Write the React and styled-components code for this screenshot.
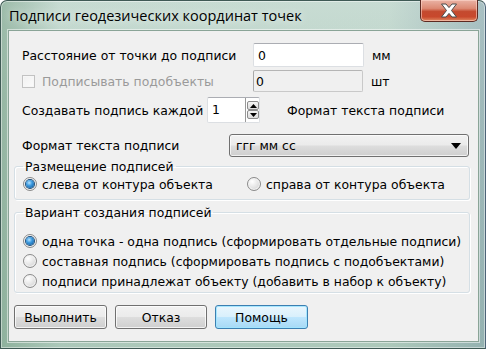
import styled, { createGlobalStyle } from "styled-components";

const GlobalStyle = createGlobalStyle`
  html, body {
    margin: 0;
    padding: 0;
    background: #ffffff;
  }
  * {
    box-sizing: border-box;
  }
`;

const App = () => {
  return (
    <>
      <GlobalStyle />
      <Window>
        <TitleBar>
          <Title>Подписи геодезических координат точек</Title>
          <CloseButton>
            <svg width="18" height="15" viewBox="0 0 18 15">
              <path
                d="M1.5 1 L6 1 L9 4.6 L12 1 L16.5 1 L11.5 7.5 L16.5 14 L12 14 L9 10.4 L6 14 L1.5 14 L6.5 7.5 Z"
                fill="#ffffff"
                stroke="#4a4a4a"
                strokeWidth="1"
                strokeLinejoin="round"
              />
            </svg>
          </CloseButton>
        </TitleBar>

        <Client>
          <Row $h={24}>
            <Label $w={231}>Расстояние от точки до подписи</Label>
            <TextInput $w={111}>0</TextInput>
            <Unit>мм</Unit>
          </Row>

          <Row $h={22} $mt={3}>
            <CheckLabel $w={231}>
              <CheckBox />
              Подписывать подобъекты
            </CheckLabel>
            <TextInput $w={110} $disabled>0</TextInput>
            <Unit>шт</Unit>
          </Row>

          <Row $h={26} $mt={5}>
            <Label $w={185}>Создавать подпись каждой</Label>
            <SpinBox>
              <span>1</span>
              <SpinButtons>
                <SpinBtn>
                  <svg width="7" height="4" viewBox="0 0 7 4">
                    <path d="M0 4 L3.5 0 L7 4 Z" fill="#000" />
                  </svg>
                </SpinBtn>
                <SpinBtn>
                  <svg width="7" height="4" viewBox="0 0 7 4">
                    <path d="M0 0 L3.5 4 L7 0 Z" fill="#000" />
                  </svg>
                </SpinBtn>
              </SpinButtons>
            </SpinBox>
            <Label $ml={27}>Формат текста подписи</Label>
          </Row>

          <Row $h={23} $mt={11}>
            <Label $w={207}>Формат текста подписи</Label>
            <Combo>
              <span>ггг мм сс</span>
              <svg width="10" height="6" viewBox="0 0 10 6">
                <path d="M0 0 L10 0 L5 6 Z" fill="#000" />
              </svg>
            </Combo>
          </Row>

          <Group $mt={2} $h={41}>
            <Legend $pl={7}>Размещение подписей</Legend>
            <RadioRow>
              <RadioItem $w={224}>
                <Radio $checked />
                слева от контура объекта
              </RadioItem>
              <RadioItem>
                <Radio />
                справа от контура объекта
              </RadioItem>
            </RadioRow>
          </Group>

          <Group $mt={5} $h={88}>
            <Legend $pl={10}>Вариант создания подписей</Legend>
            <RadioList>
              <RadioItem>
                <Radio $checked />
                одна точка - одна подпись (сформировать отдельные подписи)
              </RadioItem>
              <RadioItem>
                <Radio />
                составная подпись (сформировать подпись с подобъектами)
              </RadioItem>
              <RadioItem>
                <Radio />
                подписи принадлежат объекту (добавить в набор к объекту)
              </RadioItem>
            </RadioList>
          </Group>

          <ButtonBar>
            <Button $w={93}>Выполнить</Button>
            <Button $w={92}>Отказ</Button>
            <Button $w={93} $default>Помощь</Button>
          </ButtonBar>
        </Client>
      </Window>
    </>
  );
};

export default App;

// css starts from here

const Window = styled.div`
  width: 486px;
  height: 349px;
  display: flex;
  flex-direction: column;
  padding: 0 6px 6px 7px;
  border: 1px solid #3f5a55;
  border-right-color: #4d6478;
  border-radius: 7px 7px 0 0;
  background: linear-gradient(
      90deg,
      rgba(120, 160, 135, 0.55) 0%,
      rgba(190, 215, 205, 0.1) 12%,
      rgba(200, 220, 212, 0.1) 80%,
      rgba(110, 140, 165, 0.35) 100%
    ),
    linear-gradient(180deg, #c8dcd3 0%, #b9d1c5 30%, #a9c6b7 100%);
  box-shadow: inset 0 0 0 1px rgba(255, 255, 255, 0.45);
  font-family: "DejaVu Sans", Verdana, sans-serif;
  font-size: 12.4px;
  color: #000;
`;

const TitleBar = styled.div`
  height: 29px;
  display: flex;
  align-items: flex-start;
  justify-content: space-between;
`;

const Title = styled.div`
  padding: 6px 0 0 1px;
  font-family: "Open Sans", "Noto Sans", sans-serif;
  font-size: 14.5px;
  line-height: 18px;
  color: #000;
  text-shadow: 0 0 8px rgba(255, 255, 255, 0.9);
`;

const CloseButton = styled.div`
  width: 58px;
  height: 22px;
  margin-top: -1px;
  margin-right: 1px;
  display: flex;
  align-items: center;
  justify-content: center;
  border: 1px solid #5d2a22;
  border-top: none;
  border-radius: 0 0 5px 5px;
  background: linear-gradient(
    180deg,
    #eab3a5 0%,
    #dc8a74 40%,
    #c44a2f 55%,
    #c8482c 80%,
    #e08a62 100%
  );
  box-shadow: inset 0 0 0 1px rgba(255, 220, 210, 0.55);
`;

const Client = styled.div`
  flex: 1;
  display: flex;
  flex-direction: column;
  padding: 12px 8px 0 5px;
  background: #f0f0f0;
  border: 1px solid #8aa497;
  box-shadow: 0 0 0 1px rgba(255, 255, 255, 0.5);
`;

const Row = styled.div`
  display: flex;
  align-items: center;
  height: ${(p) => p.$h}px;
  margin-top: ${(p) => p.$mt || 0}px;
  padding-left: 8px;
`;

const Label = styled.div`
  width: ${(p) => (p.$w ? `${p.$w}px` : "auto")};
  margin-left: ${(p) => p.$ml || 0}px;
  white-space: nowrap;
  flex-shrink: 0;
`;

const CheckLabel = styled(Label)`
  display: flex;
  align-items: center;
  gap: 7px;
  color: #9a9a9a;
`;

const CheckBox = styled.span`
  width: 13px;
  height: 13px;
  border: 1px solid #c2c2c2;
  background: linear-gradient(135deg, #f0f0f0, #fbfbfb);
  box-shadow: inset 0 0 0 1px #f6f6f6;
`;

const TextInput = styled.div`
  width: ${(p) => p.$w}px;
  height: 100%;
  display: flex;
  align-items: center;
  padding-left: ${(p) => (p.$disabled ? 2 : 4)}px;
  background: ${(p) => (p.$disabled ? "#f0f0f0" : "#ffffff")};
  border: 1px solid ${(p) => (p.$disabled ? "#c9c9c9" : "#dcdfe3")};
  border-top-color: ${(p) => (p.$disabled ? "#b5b5b5" : "#abadb3")};
  border-left-color: ${(p) => (p.$disabled ? "#a8a8a8" : "#dcdfe3")};
  border-radius: 2px;
`;

const Unit = styled.div`
  margin-left: 8px;
`;

const SpinBox = styled.div`
  width: 53px;
  height: 100%;
  display: flex;
  align-items: center;
  justify-content: space-between;
  padding: 0 0 0 4px;
  background: #ffffff;
  border: 1px solid #dcdfe3;
  border-top-color: #abadb3;
  border-radius: 2px;

  span {
    padding-bottom: 1px;
  }
`;

const SpinButtons = styled.div`
  display: flex;
  flex-direction: column;
  height: 100%;
  justify-content: center;
  padding-left: 1px;
  border-left: 1px solid #9a9a9a;
`;

const SpinBtn = styled.div`
  width: 12px;
  height: 9px;
  display: flex;
  align-items: center;
  justify-content: center;
  border: 1px solid #8c8c8c;
  border-radius: 2px;
  background: linear-gradient(180deg, #f4f4f4, #dcdcdc);
`;

const Combo = styled.div`
  width: 240px;
  height: 100%;
  display: flex;
  align-items: center;
  justify-content: space-between;
  padding: 0 7px 0 6px;
  border: 1px solid #707070;
  border-radius: 3px;
  background: linear-gradient(
    180deg,
    #f2f2f2 0%,
    #ebebeb 48%,
    #dddddd 52%,
    #cfcfcf 100%
  );
  box-shadow: inset 0 0 0 1px rgba(255, 255, 255, 0.7);
`;

const Group = styled.fieldset`
  margin: ${(p) => p.$mt}px 0 0 0;
  padding: 0 8px;
  height: ${(p) => p.$h}px;
  border: 1px solid #d5dfe5;
  border-radius: 3px;
  box-shadow: inset 1px 1px 0 #ffffff, 1px 1px 0 #ffffff;
  min-width: 0;
`;

const Legend = styled.legend`
  padding: 0 2px 0 ${(p) => p.$pl - 8}px;
  margin-left: 0;
  line-height: 15px;
  white-space: nowrap;
`;

const RadioRow = styled.div`
  display: flex;
  align-items: center;
  height: 20px;
`;

const RadioList = styled.div`
  display: flex;
  flex-direction: column;
  margin-top: 11px;

  > div {
    height: 20px;
  }
`;

const RadioItem = styled.div`
  display: flex;
  align-items: center;
  gap: 5px;
  width: ${(p) => (p.$w ? `${p.$w}px` : "auto")};
  white-space: nowrap;
`;

const Radio = styled.span`
  position: relative;
  width: 14px;
  height: 14px;
  flex-shrink: 0;
  border-radius: 50%;
  border: 1px solid #8a8a8a;
  background: radial-gradient(circle at 35% 30%, #ffffff 0%, #e6e6e6 50%, #c9c9c9 100%);
  box-shadow: inset 0 0 0 1px #f4f4f4;

  &::after {
    content: "";
    display: ${(p) => (p.$checked ? "block" : "none")};
    position: absolute;
    left: 2px;
    top: 2px;
    width: 8px;
    height: 8px;
    border-radius: 50%;
    background: radial-gradient(circle at 40% 35%, #b8e4ff 0%, #3d9be0 40%, #0c4f8f 100%);
    box-shadow: 0 0 0 1px #1d4f7a;
  }
`;

const ButtonBar = styled.div`
  display: flex;
  gap: 8px;
  margin-top: 12px;
  height: 24px;
`;

const Button = styled.div`
  width: ${(p) => p.$w}px;
  height: 24px;
  display: flex;
  align-items: center;
  justify-content: center;
  border: 1px solid ${(p) => (p.$default ? "#3c7fb1" : "#707070")};
  border-radius: 3px;
  background: ${(p) =>
    p.$default
      ? "linear-gradient(180deg, #eaf6fd 0%, #d9f0fc 48%, #bee6fd 52%, #a7d9f5 100%)"
      : "linear-gradient(180deg, #f2f2f2 0%, #ebebeb 48%, #dddddd 52%, #cfcfcf 100%)"};
  box-shadow: inset 0 0 0 1px
    ${(p) => (p.$default ? "rgba(160, 230, 255, 0.9)" : "rgba(255, 255, 255, 0.75)")};
`;
